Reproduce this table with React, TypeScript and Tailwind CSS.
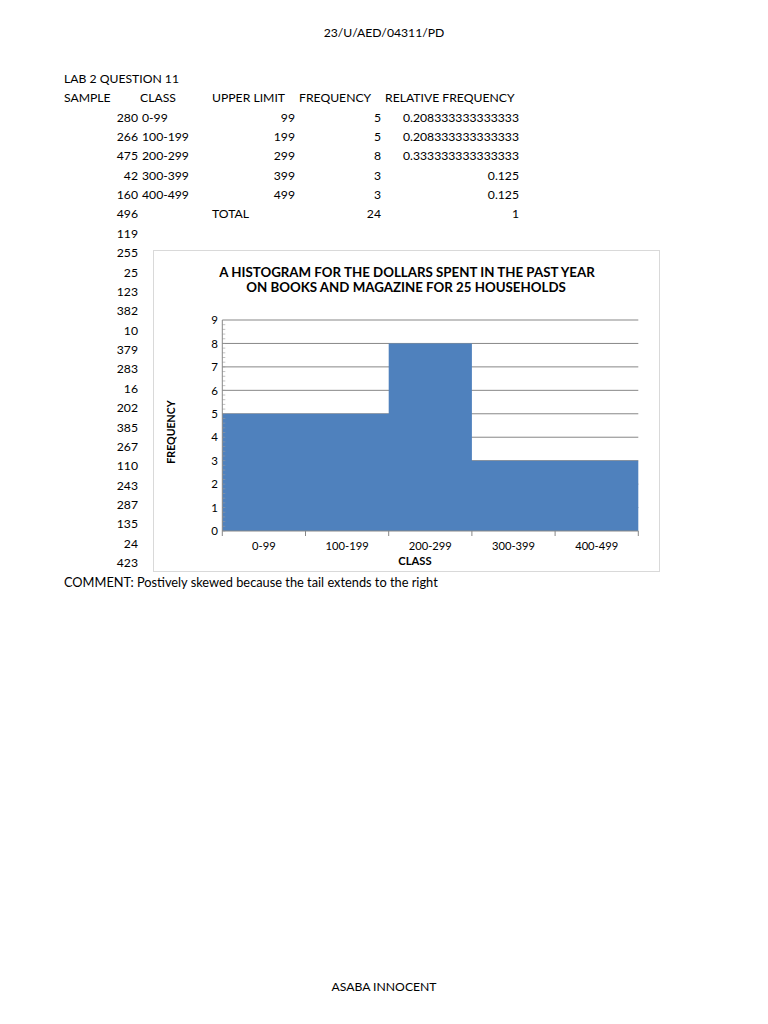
import React from "react";

type Row = [string, string, string, string, string];

const tableRows: Row[] = [
  ["280", "0-99", "99", "5", "0.208333333333333"],
  ["266", "100-199", "199", "5", "0.208333333333333"],
  ["475", "200-299", "299", "8", "0.333333333333333"],
  ["42", "300-399", "399", "3", "0.125"],
  ["160", "400-499", "499", "3", "0.125"],
];

const samples = [
  "119", "255", "25", "123", "382", "10", "379", "283", "16", "202", "385",
  "267", "110", "243", "287", "135", "24", "423",
];

const gridCls =
  "grid grid-cols-[78px_70px_87px_86px_138px] h-[19.38px] items-center leading-none whitespace-nowrap";

function Chart() {
  // coordinates relative to chart box (153,250)
  const left = 69.3;
  const right = 485.3;
  const base = 281;
  const unit = 211 / 9;
  const cw = (right - left) / 5;
  const data = [5, 5, 8, 3, 3];
  const cats = ["0-99", "100-199", "200-299", "300-399", "400-499"];
  const y = (v: number) => base - v * unit;

  let path = `M ${left} ${base}`;
  data.forEach((v, i) => {
    path += ` L ${left + i * cw} ${y(v)} L ${left + (i + 1) * cw} ${y(v)}`;
  });
  path += ` L ${right} ${base} Z`;

  const minor: number[] = [];
  for (let i = 0; i < 45; i++) minor.push(base - (i * unit) / 5);

  return (
    <div className="absolute left-[152.5px] top-[249.5px] w-[507px] h-[322px] border border-[#d9d9d9] bg-white">
      <svg width="507" height="322" className="absolute -left-px -top-px">
        <text
          x="254"
          y="26.5"
          textAnchor="middle"
          fontFamily="Lato, sans-serif"
          fontWeight="700"
          fontSize="13.3"
          fill="#000"
        >
          A HISTOGRAM FOR THE DOLLARS SPENT IN THE PAST YEAR
        </text>
        <text
          x="253"
          y="41.5"
          textAnchor="middle"
          fontFamily="Lato, sans-serif"
          fontWeight="700"
          fontSize="13.3"
          fill="#000"
        >
          ON BOOKS AND MAGAZINE FOR 25 HOUSEHOLDS
        </text>

        {[1, 2, 3, 4, 5, 6, 7, 8, 9].map((v) => (
          <line
            key={v}
            x1={left}
            x2={right}
            y1={y(v)}
            y2={y(v)}
            stroke="#878787"
            strokeWidth="1"
          />
        ))}

        <path d={path} fill="#4f81bd" />

        {minor.map((my, i) => (
          <line
            key={i}
            x1={left}
            x2={left + 3}
            y1={my}
            y2={my}
            stroke="#9a9a9a"
            strokeWidth="0.6"
          />
        ))}
        <line x1={left} x2={left} y1={y(9)} y2={base} stroke="#878787" strokeWidth="1" />
        <line x1={left} x2={right} y1={base} y2={base} stroke="#878787" strokeWidth="1" />
        {[0, 1, 2, 3, 4, 5].map((i) => (
          <line
            key={i}
            x1={left + i * cw}
            x2={left + i * cw}
            y1={base}
            y2={base + 5}
            stroke="#878787"
            strokeWidth="1"
          />
        ))}

        {[0, 1, 2, 3, 4, 5, 6, 7, 8, 9].map((v) => (
          <text
            key={v}
            x="65"
            y={y(v) + 4.2}
            textAnchor="end"
            fontFamily="Lato, sans-serif"
            fontSize="11.5"
            fill="#000"
          >
            {v}
          </text>
        ))}

        {cats.map((c, i) => (
          <text
            key={c}
            x={left + (i + 0.5) * cw}
            y="300"
            textAnchor="middle"
            fontFamily="Lato, sans-serif"
            fontSize="11.2"
            fill="#000"
          >
            {c}
          </text>
        ))}
        <text
          x="262"
          y="314.5"
          textAnchor="middle"
          fontFamily="Lato, sans-serif"
          fontWeight="700"
          fontSize="11.2"
          fill="#000"
        >
          CLASS
        </text>
        <text
          x="0"
          y="0"
          transform="translate(21.5 182) rotate(-90)"
          textAnchor="middle"
          fontFamily="Lato, sans-serif"
          fontWeight="700"
          fontSize="10.6"
          fill="#000"
        >
          FREQUENCY
        </text>
      </svg>
    </div>
  );
}

export default function App() {
  return (
    <div className="relative w-[768px] h-[1024px] bg-white text-black font-['Lato',sans-serif] text-[12.2px]">
      <div className="pt-[23.3px]">
        <div className="h-[19.38px] flex items-center justify-center leading-none">
          23/U/AED/04311/PD
        </div>
      </div>

      <div className="mt-[26.6px] pl-[62px]">
        <div className={gridCls}>
          <div className="col-span-5 px-[2px]">LAB 2 QUESTION 11</div>
        </div>
        <div className={gridCls}>
          <div className="px-[2px]">SAMPLE</div>
          <div className="px-0">CLASS</div>
          <div className="px-[2px]">UPPER LIMIT</div>
          <div className="px-[2px]">FREQUENCY</div>
          <div className="px-[2px]">RELATIVE FREQUENCY</div>
        </div>
        {tableRows.map((r) => (
          <div key={r[0]} className={gridCls}>
            <div className="px-[2px] text-right">{r[0]}</div>
            <div className="px-[2px]">{r[1]}</div>
            <div className="px-[2px] text-right">{r[2]}</div>
            <div className="px-[2px] text-right">{r[3]}</div>
            <div className="px-[2px] text-right">{r[4]}</div>
          </div>
        ))}
        <div className={gridCls}>
          <div className="px-[2px] text-right">496</div>
          <div />
          <div className="px-[2px]">TOTAL</div>
          <div className="px-[2px] text-right">24</div>
          <div className="px-[2px] text-right">1</div>
        </div>
        {samples.map((s, i) => (
          <div key={i} className={gridCls}>
            <div className="px-[2px] text-right">{s}</div>
          </div>
        ))}
        <div className={gridCls}>
          <div className="col-span-5 px-[2px] text-[12.8px]">
            COMMENT: Postively skewed because the tail extends to the right
          </div>
        </div>
      </div>

      <Chart />

      <div className="absolute left-0 right-0 top-[977.3px] h-[19.38px] flex items-center justify-center leading-none">
        ASABA INNOCENT
      </div>
    </div>
  );
}
